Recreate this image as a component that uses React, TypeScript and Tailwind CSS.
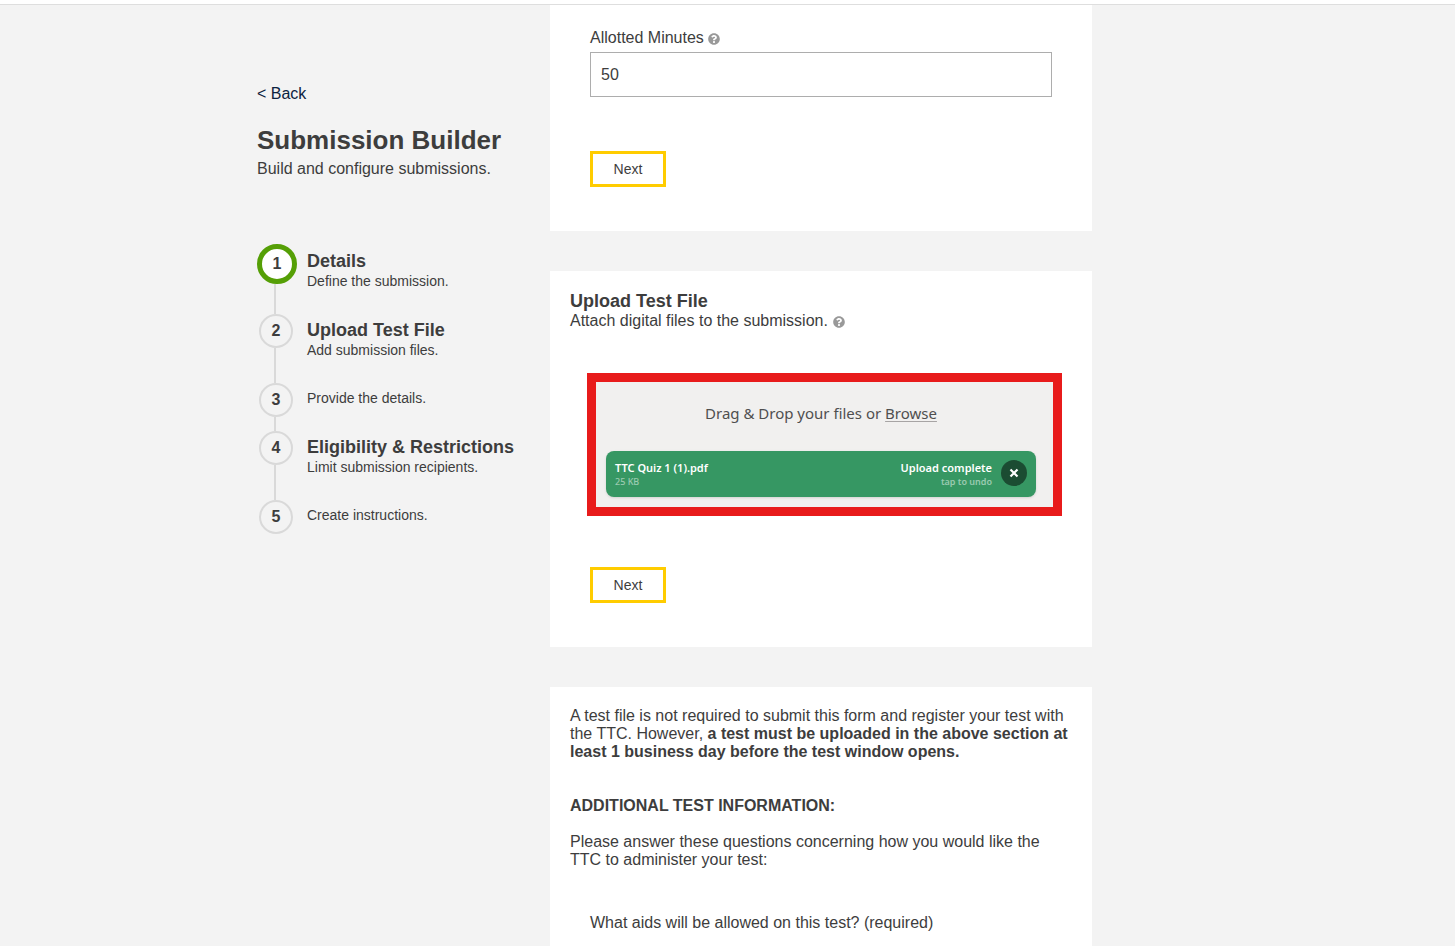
import { useState } from 'react';
import { FaQuestionCircle } from 'react-icons/fa';

const steps = [
  { title: 'Details', text: 'Define the submission.' },
  { title: 'Upload Test File', text: 'Add submission files.' },
  { text: 'Provide the details.' },
  { title: 'Eligibility & Restrictions', text: 'Limit submission recipients.' },
  { text: 'Create instructions.' },
];

function HelpIcon() {
  return <FaQuestionCircle className="w-3 h-3 mt-[2px] text-[#999999]" />;
}

function NextButton() {
  return (
    <button
      type="button"
      className="w-[76px] h-9 border-3 border-[#ffcc00] bg-white text-sm cursor-pointer"
    >
      Next
    </button>
  );
}

function Step({ index, title, text }: { index: number; title?: string; text: string }) {
  const active = index === 0;
  const last = index === steps.length - 1;

  return (
    <li className="flex gap-[10px]">
      <div className="w-10 shrink-0 flex flex-col">
        <span
          className={`
            flex items-center justify-center rounded-full font-bold shrink-0
            ${active
              ? 'w-10 h-10 border-5 border-[#559f06] bg-white'
              : 'w-[34px] h-[34px] ml-[2px] border-2 border-[#d9d9d9]'
            }
          `}
        >
          {index + 1}
        </span>
        {!last && <span className="flex-1 w-[2px] ml-[17px] bg-[#d9d9d9]" />}
      </div>
      <div className={active ? 'pt-[7px] pb-[23px]' : title ? 'pt-[6px] pb-[23px]' : 'pt-[5px] pb-[23px]'}>
        {title && <h2 className="text-lg leading-5 font-bold">{title}</h2>}
        <p className="text-sm leading-5">{text}</p>
      </div>
    </li>
  );
}

function Sidebar() {
  return (
    <aside className="w-[293px] shrink-0 pt-20">
      <a href="#" className="block leading-[18px] text-[#0c2340]">&lt; Back</a>
      <h1 className="mt-[21px] text-[26px] leading-8 font-bold">Submission Builder</h1>
      <p className="mt-[3px] leading-5">Build and configure submissions.</p>
      <ol className="mt-[65px]">
        {steps.map((step, i) => (
          <Step key={step.text} index={i} title={step.title} text={step.text} />
        ))}
      </ol>
    </aside>
  );
}

function FileDrop() {
  return (
    <div className="mt-[42px] ml-[17px] mr-[10px] border-9 border-[#e81b1b] bg-[#f1f0ef] pt-[19px] px-[10px] pb-[10px] font-['Noto_Sans','Open_Sans',sans-serif]">
      <p className="pr-[7px] text-center text-[15px] leading-6 text-[#4f4f4f]">
        Drag &amp; Drop your files or{' '}
        <a href="#" className="underline decoration-[#a7a4a4] underline-offset-2">Browse</a>
      </p>
      <div className="mt-[26px] mr-[7px] h-[46px] px-[9px] flex items-start rounded-lg bg-[#369763] text-white shadow-sm">
        <div className="flex-1 pt-[9px]">
          <p className="text-[11px] leading-4 font-semibold">TTC Quiz 1 (1).pdf</p>
          <p className="text-[9px] leading-3 font-medium text-white/50">25 KB</p>
        </div>
        <div className="pt-[9px] text-right">
          <p className="text-[11px] leading-4 font-semibold">Upload complete</p>
          <p className="text-[9px] leading-3 font-semibold text-white/50">tap to undo</p>
        </div>
        <button
          type="button"
          aria-label="Remove file"
          className="mt-[9px] ml-[9px] w-[26px] h-[26px] rounded-full bg-[#1b4c32] flex items-center justify-center cursor-pointer"
        >
          <svg viewBox="0 0 10 10" className="w-[10px] h-[10px]" fill="none" stroke="currentColor" strokeWidth="2.2">
            <path d="M1.5 1.5l7 7M8.5 1.5l-7 7" />
          </svg>
        </button>
      </div>
    </div>
  );
}

export default function App() {
  const [minutes, setMinutes] = useState('50');

  return (
    <div className="min-h-screen flex flex-col bg-[#f3f3f3] font-['Liberation_Sans',Arial,sans-serif] text-base text-[#3d3d3d]">
      <header className="h-[5px] shrink-0 bg-white border-b border-[#dedede]" />

      <div className="flex-1 w-full max-w-[941px] mx-auto flex">
        <Sidebar />

        <main className="flex-1 max-w-[542px] flex flex-col gap-10">
          {/* Details */}
          <section className="bg-white px-10 pt-6 pb-11">
            <div className="flex items-center gap-1 leading-[18px]">
              <label htmlFor="minutes">Allotted Minutes</label>
              <HelpIcon />
            </div>
            <input
              id="minutes"
              type="text"
              value={minutes}
              onChange={(e) => setMinutes(e.target.value)}
              className="block mt-[5px] mb-[54px] w-full h-[45px] px-[10px] border border-[#adadad] bg-white"
            />
            <NextButton />
          </section>

          {/* Upload */}
          <section className="bg-white px-5 pt-5 pb-11">
            <h2 className="text-lg leading-5 font-bold">Upload Test File</h2>
            <div className="flex items-center gap-[5px] leading-5">
              <p>Attach digital files to the submission.</p>
              <HelpIcon />
            </div>
            <FileDrop />
            <div className="mt-[51px] ml-5">
              <NextButton />
            </div>
          </section>

          {/* Test information */}
          <section className="flex-1 bg-white px-5 pt-5 pb-3 leading-[18px]">
            <p>
              A test file is not required to submit this form and register your test with the TTC. However,{' '}
              <strong>
                a test must be uploaded in the above section at least 1 business day before the test window opens.
              </strong>
            </p>
            <h2 className="mt-9 font-bold">ADDITIONAL TEST INFORMATION:</h2>
            <p className="mt-[18px]">
              Please answer these questions concerning how you would like the TTC to administer your test:
            </p>
            <p className="mt-[45px] ml-5">What aids will be allowed on this test? (required)</p>
          </section>
        </main>
      </div>
    </div>
  );
}
